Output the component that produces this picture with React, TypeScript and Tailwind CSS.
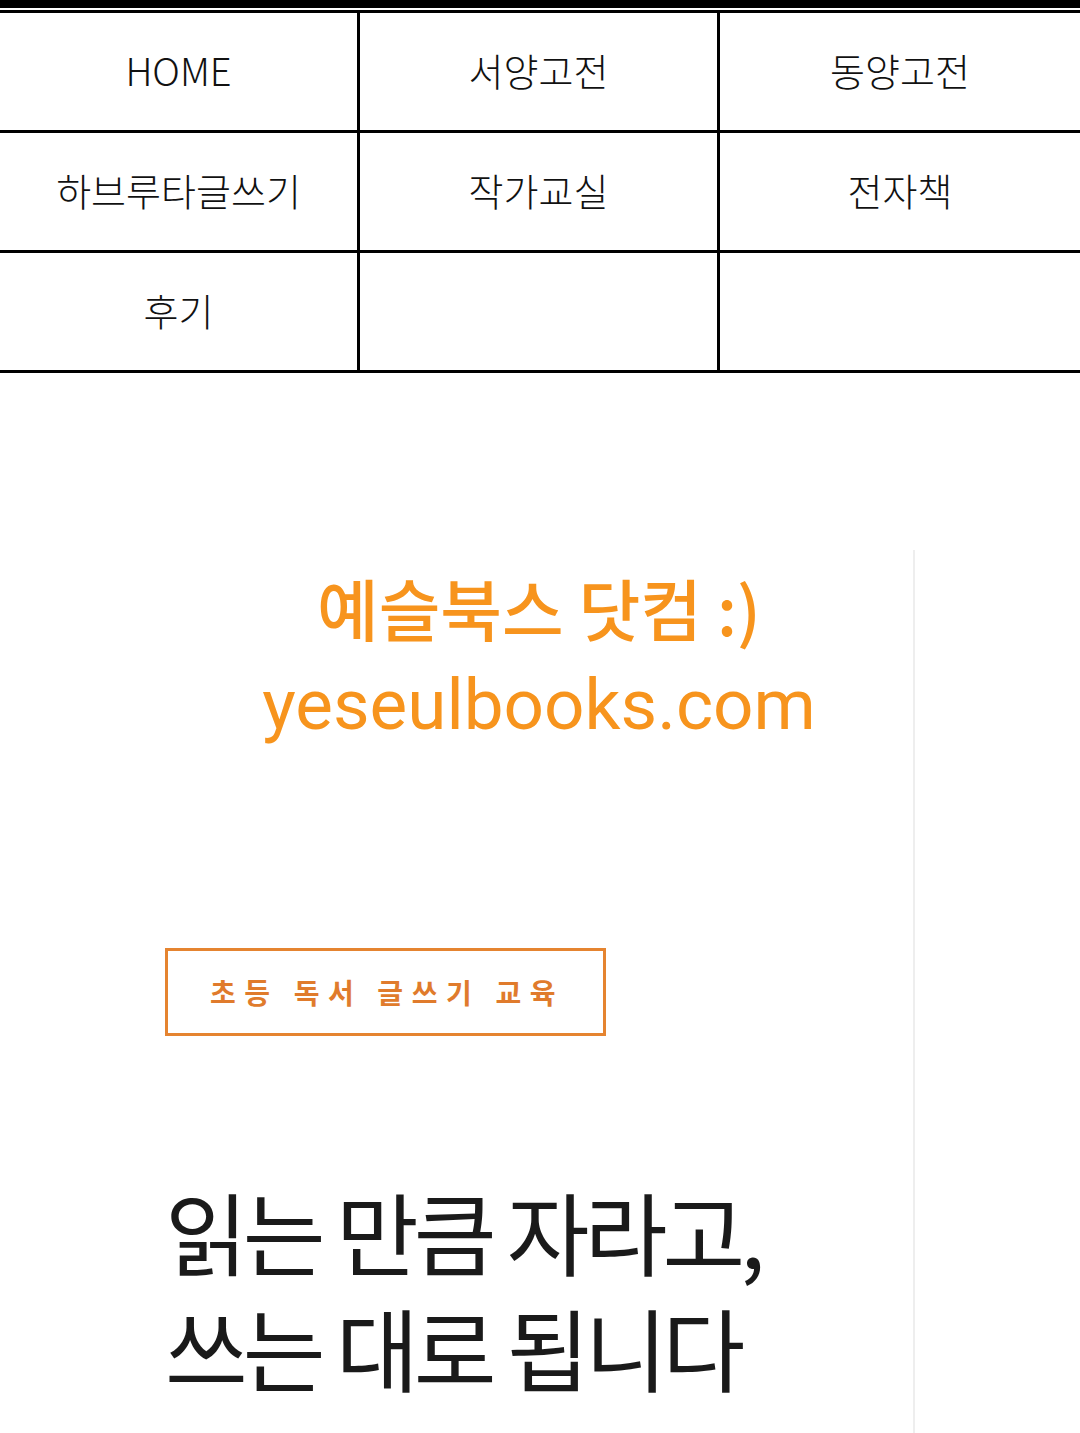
import React from "react";

const cells = ["HOME", "서양고전", "동양고전", "하브루타글쓰기", "작가교실", "전자책", "후기", "", ""];

export default function App() {
  return (
    <div className="w-[1080px] h-[1433px] overflow-hidden bg-white" style={{ fontFamily: '"Noto Sans CJK KR", "Noto Sans", sans-serif' }}>
      <div className="h-[8px] bg-black" />
      <div className="h-[2px]" />
      <div className="grid grid-cols-3 border-t-[3px] border-black">
        {cells.map((c, i) => (
          <div
            key={i}
            className={`h-[120px] flex items-center justify-center pb-[4px] border-b-[3px] border-black ${i % 3 !== 2 ? "border-r-[3px]" : ""} text-[38px] font-light text-[#111]`}
          >
            {c}
          </div>
        ))}
      </div>
      <div className="h-[177px]" />
      <div className="ml-[165px] w-[750px] border-r-2 border-[#eeeeee] h-[900px] pt-[8px]">
        <div className="flex flex-col items-center text-[#f7941d]">
          <div className="text-[67px] font-medium leading-[98px]">예슬북스 닷컴 :)</div>
          <div className="text-[71px] leading-[98px]" style={{ fontFamily: 'Roboto, "Noto Sans CJK KR", sans-serif' }}>yeseulbooks.com</div>
        </div>
        <div className="h-[194px]" />
        <div className="w-[441px] h-[88px] border-[3px] border-[#e58430] flex items-center pl-[42px] text-[28px] font-bold text-[#e07b2c] tracking-[8.6px]">
          초등 독서 글쓰기 교육
        </div>
        <div className="h-[136px]" />
        <div className="text-[90px] font-normal leading-[116px] text-[#1a1a1a] tracking-[-0.055em]">
          <div>읽는 만큼 자라고,</div>
          <div>쓰는 대로 됩니다</div>
        </div>
      </div>
    </div>
  );
}
